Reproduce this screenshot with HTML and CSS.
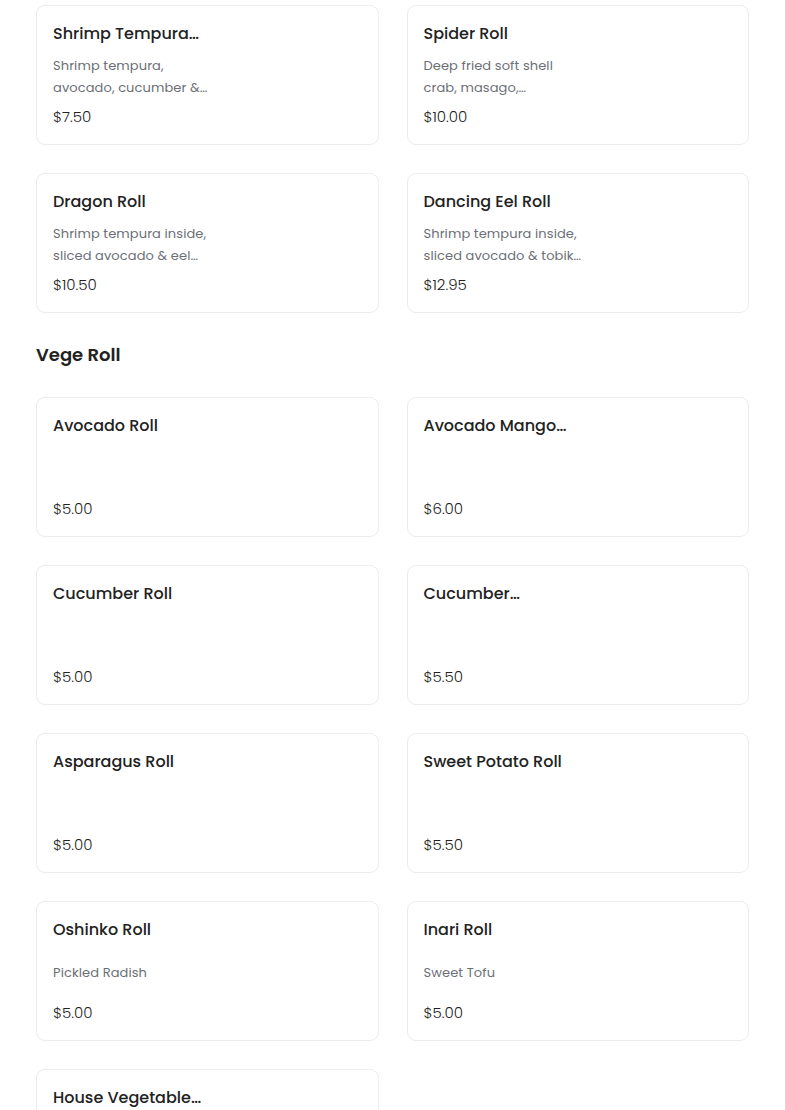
FILE: index.html
```html
<!DOCTYPE html>
<html lang="en">
<head>
<meta charset="utf-8">
<title>Menu</title>
<link rel="stylesheet" href="styles.css">
</head>
<body>
<main class="menu">
  <section class="group">
    <div class="grid">
      <div class="card">
        <div class="title">Shrimp Tempura…</div>
        <div class="desc"><p>Shrimp tempura, avocado, cucumber &amp;…</p></div>
        <div class="price">$7.50</div>
      </div>
      <div class="card">
        <div class="title">Spider Roll</div>
        <div class="desc"><p>Deep fried soft shell crab, masago,…</p></div>
        <div class="price">$10.00</div>
      </div>
      <div class="card">
        <div class="title">Dragon Roll</div>
        <div class="desc"><p>Shrimp tempura inside, sliced avocado &amp; eel…</p></div>
        <div class="price">$10.50</div>
      </div>
      <div class="card">
        <div class="title">Dancing Eel Roll</div>
        <div class="desc"><p>Shrimp tempura inside, sliced avocado &amp; tobik…</p></div>
        <div class="price">$12.95</div>
      </div>
    </div>
  </section>
  <section class="group">
    <h2 class="heading">Vege Roll</h2>
    <div class="grid">
      <div class="card">
        <div class="title">Avocado Roll</div>
        <div class="desc"></div>
        <div class="price">$5.00</div>
      </div>
      <div class="card">
        <div class="title">Avocado Mango…</div>
        <div class="desc"></div>
        <div class="price">$6.00</div>
      </div>
      <div class="card">
        <div class="title">Cucumber Roll</div>
        <div class="desc"></div>
        <div class="price">$5.00</div>
      </div>
      <div class="card">
        <div class="title">Cucumber…</div>
        <div class="desc"></div>
        <div class="price">$5.50</div>
      </div>
      <div class="card">
        <div class="title">Asparagus Roll</div>
        <div class="desc"></div>
        <div class="price">$5.00</div>
      </div>
      <div class="card">
        <div class="title">Sweet Potato Roll</div>
        <div class="desc"></div>
        <div class="price">$5.50</div>
      </div>
      <div class="card">
        <div class="title">Oshinko Roll</div>
        <div class="desc"><p>Pickled Radish</p></div>
        <div class="price">$5.00</div>
      </div>
      <div class="card">
        <div class="title">Inari Roll</div>
        <div class="desc"><p>Sweet Tofu</p></div>
        <div class="price">$5.00</div>
      </div>
      <div class="card">
        <div class="title">House Vegetable…</div>
        <div class="desc"></div>
        <div class="price">$5.00</div>
      </div>
    </div>
  </section>
</main>
</body>
</html>
```
FILE: styles.css
```css
html, body {
  margin: 0;
  padding: 0;
  background: #ffffff;
}
body {
  font-family: Poppins, Inter, "Noto Sans", sans-serif;
  color: #222222;
}
.menu {
  padding: 5px 36px 0 36px;
  display: flex;
  flex-direction: column;
  gap: 28px;
}
.heading {
  margin: 0 0 28px 0;
  font-size: 18px;
  line-height: 28px;
  font-weight: 600;
  color: #222222;
}
.grid {
  display: grid;
  grid-template-columns: 1fr 1fr;
  gap: 28px;
}
.card {
  border: 1px solid #ececec;
  border-radius: 9px;
  padding: 16px;
  height: 140px;
  box-sizing: border-box;
  display: flex;
  flex-direction: column;
}
.title {
  font-size: 16px;
  line-height: 24px;
  font-weight: 500;
  color: #222222;
  white-space: nowrap;
}
.desc {
  margin-top: 9px;
  height: 44px;
  width: 162px;
  display: flex;
  align-items: center;
}
.desc p {
  margin: 0;
  font-size: 13px;
  line-height: 22px;
  color: #6b6f76;
  letter-spacing: 0.1px;
}
.price {
  margin-top: 7px;
  font-size: 15px;
  line-height: 22px;
  font-weight: 300;
  color: #222222;
}
```
